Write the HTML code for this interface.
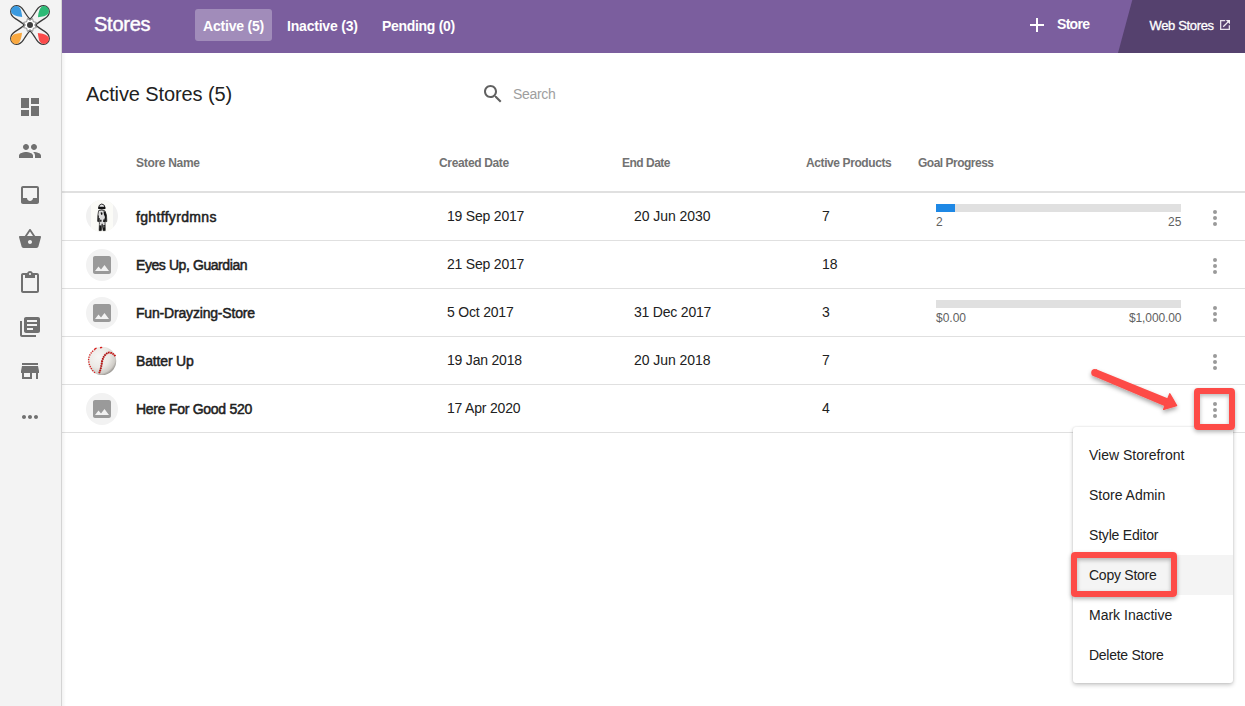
<!DOCTYPE html>
<html><head><meta charset="utf-8">
<style>
*{box-sizing:border-box;margin:0;padding:0}
html,body{width:1245px;height:706px;overflow:hidden;background:#fff;font-family:"Liberation Sans",sans-serif;color:#212121}
#side{position:absolute;left:0;top:0;width:62px;height:706px;background:#f3f3f3;border-right:1px solid #d4d4d4;z-index:3}
#sideShadow{position:absolute;left:62px;top:53px;width:4px;height:654px;background:linear-gradient(to right,rgba(0,0,0,.05),rgba(0,0,0,0));z-index:2}
#hdr{position:absolute;left:62px;top:0;width:1183px;height:53px;background:#7b5e9e;overflow:hidden}
#hdrShadow{position:absolute;left:62px;top:52px;width:1183px;height:2px;background:linear-gradient(to bottom,rgba(0,0,0,.06),rgba(0,0,0,0))}
.t{position:absolute;white-space:nowrap;line-height:1}
.w{color:#fff}
.b{font-weight:700}
.md{-webkit-text-stroke:0.3px #fff}
.sico{position:absolute;left:18px;width:24px;height:24px;fill:#707070}
.th{font-size:12px;font-weight:700;color:#727272}
.td{font-size:14px;color:#212121}
.nm{font-size:14px;font-weight:400;color:#212121;-webkit-text-stroke:0.5px #212121}
.line{position:absolute;left:62px;width:1183px;height:1px;background:#e0e0e0}
.av{position:absolute;left:86px;width:32px;height:32px;border-radius:50%;background:#f2f2f2;overflow:hidden}
.kb{position:absolute;left:1203px;width:24px;height:24px;fill:#9a9a9a}
.bar{position:absolute;left:936px;width:245px;height:8px;background:#e0e0e0}
.pl{font-size:12px;color:#616161}
.mi{font-size:14px;color:#212121}
</style></head><body>
<!-- sidebar -->
<div id="side">
  <svg style="position:absolute;left:10px;top:5px" width="40" height="40" viewBox="0 0 40 40">
    <g fill="none" stroke="#3a3a3a" stroke-width="1.25">
      <path id="lp" d="M20,14.3 C17.5,11.8 15.6,8.6 13.6,5.4 C11.6,2.2 9.3,0.7 6.4,0.7 C3.3,0.7 0.7,3.3 0.7,6.4 C0.7,9.3 2.2,11.6 5.4,13.6 C8.6,15.6 11.8,17.5 14.3,20"/>
      <use href="#lp" transform="rotate(90 20 20)"/>
      <use href="#lp" transform="rotate(180 20 20)"/>
      <use href="#lp" transform="rotate(270 20 20)"/>
    </g>
    <path id="tp" fill="#3a9ae0" d="M12.2,12 C8,11.6 3,10.5 1.6,8 C0,5 2.5,1.2 5.8,1.1 C9,1 10.8,3.6 11.2,6 C11.6,8 12,10 12.2,12Z"/>
    <path fill="#2dba76" d="M12.2,12 C8,11.6 3,10.5 1.6,8 C0,5 2.5,1.2 5.8,1.1 C9,1 10.8,3.6 11.2,6 C11.6,8 12,10 12.2,12Z" transform="rotate(90 20 20)"/>
    <path fill="#fb4b4b" d="M12.2,12 C8,11.6 3,10.5 1.6,8 C0,5 2.5,1.2 5.8,1.1 C9,1 10.8,3.6 11.2,6 C11.6,8 12,10 12.2,12Z" transform="rotate(180 20 20)"/>
    <path fill="#f9a83f" d="M12.2,12 C8,11.6 3,10.5 1.6,8 C0,5 2.5,1.2 5.8,1.1 C9,1 10.8,3.6 11.2,6 C11.6,8 12,10 12.2,12Z" transform="rotate(270 20 20)"/>
    <polygon points="26.37,22.64 23.25,23.25 22.64,26.37 20.00,24.60 17.36,26.37 16.75,23.25 13.63,22.64 15.40,20.00 13.63,17.36 16.75,16.75 17.36,13.63 20.00,15.40 22.64,13.63 23.25,16.75 26.37,17.36 24.60,20.00" fill="#fff" stroke="#505050" stroke-width="0.6" stroke-linejoin="miter"/>
    <circle cx="20" cy="20" r="3" fill="#3f3f3f"/>
  </svg>
  <!-- dashboard -->
  <svg class="sico" style="top:95px" viewBox="0 0 24 24"><path d="M3 13h8V3H3v10zm0 8h8v-6H3v6zm10 0h8V11h-8v10zm0-18v6h8V3h-8z"/></svg>
  <!-- people -->
  <svg class="sico" style="top:139px" viewBox="0 0 24 24"><path d="M16 11c1.66 0 2.99-1.34 2.99-3S17.66 5 16 5c-1.66 0-3 1.34-3 3s1.34 3 3 3zm-8 0c1.66 0 2.99-1.34 2.99-3S9.66 5 8 5C6.34 5 5 6.34 5 8s1.34 3 3 3zm0 2c-2.33 0-7 1.17-7 3.500V19h14v-2.5c0-2.330-4.670-3.500-7-3.500zm8 0c-.29 0-.62.02-.97.05 1.160.840 1.970 1.970 1.970 3.450V19h6v-2.5c0-2.330-4.670-3.500-7-3.500z"/></svg>
  <!-- inbox -->
  <svg class="sico" style="top:183px" viewBox="0 0 24 24"><path d="M19 3H4.99c-1.11 0-1.98.89-1.98 2L3 19c0 1.1.88 2 1.99 2H19c1.1 0 2-.9 2-2V5c0-1.11-.9-2-2-2zm0 12h-4c0 1.66-1.35 3-3 3s-3-1.34-3-3H4.99V5H19v10z"/></svg>
  <!-- basket -->
  <svg class="sico" style="top:227px" viewBox="0 0 24 24"><path d="M17.21 9l-4.38-6.56c-.19-.28-.51-.42-.83-.42-.32 0-.64.14-.83.43L6.79 9H2c-.55 0-1 .45-1 1 0 .09.01.18.04.27l2.54 9.270c.23.84 1 1.46 1.92 1.46h13c.92 0 1.69-.62 1.93-1.46l2.54-9.270L23 10c0-.55-.45-1-1-1h-4.79zM9 9l3-4.4L15 9H9zm3 8c-1.1 0-2-.9-2-2s.9-2 2-2 2 .9 2 2-.9 2-2 2z"/></svg>
  <!-- clipboard -->
  <svg class="sico" style="top:271px" viewBox="0 0 24 24"><path d="M19 2h-4.18C14.4.84 13.3 0 12 0c-1.3 0-2.4.84-2.82 2H5c-1.1 0-2 .9-2 2v16c0 1.1.9 2 2 2h14c1.1 0 2-.9 2-2V4c0-1.1-.9-2-2-2zm-7 0c.55 0 1 .45 1 1s-.45 1-1 1-1-.45-1-1 .45-1 1-1zm7 18H5V4h2v3h10V4h2v16z"/></svg>
  <!-- library books -->
  <svg class="sico" style="top:315px" viewBox="0 0 24 24"><path d="M4 6H2v14c0 1.1.9 2 2 2h14v-2H4V6zm16-4H8c-1.1 0-2 .9-2 2v12c0 1.1.9 2 2 2h12c1.1 0 2-.9 2-2V4c0-1.1-.9-2-2-2zm-1 9H9V9h10v2zm-4 4H9v-2h6v2zm4-8H9V5h10v2z"/></svg>
  <!-- store -->
  <svg class="sico" style="top:359px" viewBox="0 0 24 24"><path d="M20 4H4v2h16V4zm1 10v-2l-1-5H4l-1 5v2h1v6h10v-6h4v6h2v-6h1zm-9 4H6v-4h6v4z"/></svg>
  <!-- more -->
  <svg class="sico" style="top:405px" viewBox="0 0 24 24"><path d="M6 10c-1.1 0-2 .9-2 2s.9 2 2 2 2-.9 2-2-.9-2-2-2zm12 0c-1.1 0-2 .9-2 2s.9 2 2 2 2-.9 2-2-.9-2-2-2zm-6 0c-1.1 0-2 .9-2 2s.9 2 2 2 2-.9 2-2-.9-2-2-2z"/></svg>
</div>
<div id="sideShadow"></div>

<!-- header -->
<div id="hdr">
  <div style="position:absolute;left:1056px;top:0;width:200px;height:53px;background:#55416e;clip-path:polygon(14.3px 0,200px 0,200px 53px,0 53px)"></div>
  <div style="position:absolute;left:133px;top:9px;width:77px;height:32px;border-radius:3px;background:rgba(255,255,255,.29)"></div>
</div>
<div class="t w" style="left:94px;top:14.3px;font-size:20px;letter-spacing:-0.25px;-webkit-text-stroke:0.45px #fff">Stores</div>
<div class="t w b" style="left:203px;top:18.5px;font-size:14px;letter-spacing:-0.2px">Active (5)</div>
<div class="t w b" style="left:287px;top:18.5px;font-size:14px;letter-spacing:-0.2px">Inactive (3)</div>
<div class="t w b" style="left:382px;top:18.5px;font-size:14px;letter-spacing:-0.3px">Pending (0)</div>
<svg style="position:absolute;left:1030px;top:18px" width="14" height="14" viewBox="0 0 14 14"><path d="M6 0h2v6h6v2H8v6H6V8H0V6h6z" fill="#fff"/></svg>
<div class="t w b" style="left:1057px;top:17px;font-size:14px;letter-spacing:-0.7px">Store</div>
<div class="t w md" style="left:1149.5px;top:18.8px;font-size:13px;letter-spacing:-0.34px">Web Stores</div>
<svg style="position:absolute;left:1219.5px;top:19.5px;opacity:.9" width="11" height="11" viewBox="0 0 11 11"><path d="M5.2,0.65 H0.65 V9.35 H9.35 V5.2" fill="none" stroke="#f4f2f7" stroke-width="1.3"/><path d="M3.2,6.8 L8.6,1.4" fill="none" stroke="#fff" stroke-width="1.3"/><path d="M5.8,0 H10 V4.2 Z" fill="#fff"/></svg>

<!-- title & search -->
<div class="t" style="left:86px;top:84px;font-size:20px;letter-spacing:-0.1px;color:#212121">Active Stores (5)</div>
<svg style="position:absolute;left:481px;top:82px" width="24" height="24" viewBox="0 0 24 24"><path fill="#616161" d="M15.5 14h-.79l-.28-.27C15.41 12.59 16 11.11 16 9.5 16 5.910 13.090 3 9.5 3S3 5.910 3 9.5 5.910 16 9.5 16c1.610 0 3.090-.59 4.230-1.570l.27.28v.79l5 4.990L20.490 19l-4.990-5zm-6 0C7.010 14 5 11.990 5 9.5S7.010 5 9.5 5 14 7.010 14 9.5 11.990 14 9.5 14z"/></svg>
<div class="t" style="left:513px;top:87px;font-size:14px;letter-spacing:-0.3px;color:#9e9e9e">Search</div>

<!-- table header -->
<div class="t th" style="left:136px;top:157px;letter-spacing:-0.3px">Store Name</div>
<div class="t th" style="left:439px;top:157px;letter-spacing:-0.35px">Created Date</div>
<div class="t th" style="left:622px;top:157px;letter-spacing:-0.5px">End Date</div>
<div class="t th" style="left:806px;top:157px;letter-spacing:-0.4px">Active Products</div>
<div class="t th" style="left:918px;top:157px;letter-spacing:-0.5px">Goal Progress</div>
<div class="line" style="top:191px;height:2px"></div>

<!-- rows -->
<div class="line" style="top:240px"></div>
<div class="line" style="top:288px"></div>
<div class="line" style="top:336px"></div>
<div class="line" style="top:384px"></div>
<div class="line" style="top:432px"></div>

<!-- row 1 -->
<div class="av" style="top:200px;background:#f1f1f1">
  <svg width="32" height="32" viewBox="0 0 32 32">
    <rect x="5" y="0" width="22" height="32" fill="#fbfbf7"/>
    <!-- silhouette light -->
    <path d="M12.6 8.4 Q12.6 4.2 15.8 4 Q19 4.2 19.1 8.4 Z" fill="#e9e9e9" stroke="#111" stroke-width="0.9"/>
    <path d="M12.4 6.8 H19.2 V9 Q15.8 9.8 12.4 9Z" fill="#111"/>
    <g transform="translate(16 0) scale(0.8 1) translate(-16 0)">
    <path d="M11.8 10.6 Q15.6 9.6 19.6 10.8 L21.6 15 L22 21.5 L20.6 21.8 L19.9 17.8 L19.8 22.5 L20 30.6 L17.4 30.6 L16.2 23.8 L15.1 30.6 L12.5 30.6 L12.8 22.5 L12.4 18 L11.9 21.8 L10.6 21.4 L10.9 15Z" fill="#dcdcdc" stroke="#151515" stroke-width="0.8"/>
    <g fill="#141414">
      <path d="M17.8 11.2 L20.4 11.8 L21.4 15.8 L21.8 21.5 L20.4 21.6 L19.6 16.8 L18.4 14.6Z"/>
      <path d="M14.2 12.6 L16.2 12.2 L16.8 14.2 L15 15Z"/>
      <path d="M13.4 19.6 L15.4 19 L15.6 21.6 L13.4 21.8Z M17.6 19.6 L19.6 19.2 L19.7 22 L17.4 22Z"/>
      <path d="M12.8 25 L15.4 25.4 L15.1 30.6 L12.5 30.6Z"/>
      <path d="M16.9 25.4 L19.9 25 L20 30.6 L17.4 30.6Z"/>
      <path d="M10.8 15.6 L12 15.4 L11.9 21.6 L10.6 21.4Z"/>
    </g>
    <g fill="#f2f2f2">
      <circle cx="13.6" cy="24.8" r="0.6"/>
      <circle cx="18.4" cy="26.8" r="0.6"/>
      <circle cx="14.8" cy="19.6" r="0.8"/>
    </g>
  </g>
  </svg>
</div>
<div class="t nm" style="left:136px;top:210px;letter-spacing:0.33px">fghtffyrdmns</div>
<div class="t td" style="left:447px;top:209px;letter-spacing:-0.2px">19 Sep 2017</div>
<div class="t td" style="left:634px;top:209px;letter-spacing:-0.05px">20 Jun 2030</div>
<div class="t td" style="left:822px;top:209px">7</div>
<div class="bar" style="top:204px"><div style="width:19px;height:8px;background:#1e88e5"></div></div>
<div class="t pl" style="left:936px;top:216px">2</div>
<div class="t pl" style="left:1168px;top:216px">25</div>
<svg class="kb" style="top:206px" viewBox="0 0 24 24"><circle cx="12" cy="6" r="2"/><circle cx="12" cy="12" r="2"/><circle cx="12" cy="18" r="2"/></svg>

<!-- row 2 -->
<div class="av" style="top:249px"><svg style="position:absolute;left:7px;top:7px" width="18" height="18" viewBox="3 3 18 18"><path fill="#9a9a9a" d="M21 19V5c0-1.1-.9-2-2-2H5c-1.1 0-2 .9-2 2v14c0 1.1.9 2 2 2h14c1.1 0 2-.9 2-2zM8.5 13.5l2.5 3.01L14.5 12l4.5 6H5l3.5-4.5z"/></svg></div>
<div class="t nm" style="left:136px;top:258px;letter-spacing:-0.42px">Eyes Up, Guardian</div>
<div class="t td" style="left:447px;top:257px;letter-spacing:-0.2px">21 Sep 2017</div>
<div class="t td" style="left:822px;top:257px">18</div>
<svg class="kb" style="top:254px" viewBox="0 0 24 24"><circle cx="12" cy="6" r="2"/><circle cx="12" cy="12" r="2"/><circle cx="12" cy="18" r="2"/></svg>

<!-- row 3 -->
<div class="av" style="top:297px"><svg style="position:absolute;left:7px;top:7px" width="18" height="18" viewBox="3 3 18 18"><path fill="#9a9a9a" d="M21 19V5c0-1.1-.9-2-2-2H5c-1.1 0-2 .9-2 2v14c0 1.1.9 2 2 2h14c1.1 0 2-.9 2-2zM8.5 13.5l2.5 3.01L14.5 12l4.5 6H5l3.5-4.5z"/></svg></div>
<div class="t nm" style="left:136px;top:306px;letter-spacing:-0.18px">Fun-Drayzing-Store</div>
<div class="t td" style="left:447px;top:305px;letter-spacing:-0.2px">5 Oct 2017</div>
<div class="t td" style="left:634px;top:305px;letter-spacing:-0.2px">31 Dec 2017</div>
<div class="t td" style="left:822px;top:305px">3</div>
<div class="bar" style="top:300px"></div>
<div class="t pl" style="left:936px;top:312px">$0.00</div>
<div class="t pl" style="left:1129px;top:312px;letter-spacing:-0.12px">$1,000.00</div>
<svg class="kb" style="top:302px" viewBox="0 0 24 24"><circle cx="12" cy="6" r="2"/><circle cx="12" cy="12" r="2"/><circle cx="12" cy="18" r="2"/></svg>

<!-- row 4 -->
<div class="av" style="top:345px;background:#fff">
  <svg width="32" height="32" viewBox="0 0 32 32">
    <defs><radialGradient id="bg" cx="38%" cy="35%" r="70%"><stop offset="0" stop-color="#f7f6f4"/><stop offset=".55" stop-color="#ebe9e5"/><stop offset=".85" stop-color="#cfccc7"/><stop offset="1" stop-color="#8f8c88"/></radialGradient></defs>
    <circle cx="16" cy="15.9" r="14.2" fill="url(#bg)"/>
    <path d="M9.2 4.2 Q3 8.5 2.6 14.8 Q3 23 9.6 28.2" fill="none" stroke="#d81c1c" stroke-width="1.3" stroke-dasharray="1.3 1.1"/>
    <path d="M29.4 11.2 Q26 7 22.3 7.7 Q17.5 9.5 16 16.9 Q15 24 13.1 28.2" fill="none" stroke="#c41414" stroke-width="2" stroke-dasharray="1.6 0.7"/>
    <path d="M22.3 7.7 Q17.5 9.5 16 16.9 Q15 24 13.1 28.2" fill="none" stroke="#3a0a0a" stroke-width="0.6" stroke-dasharray="1 1.3"/>
    <path d="M8.6 3.8 L10.6 3.2 M14 2.8 L16.2 2.4" stroke="#d81c1c" stroke-width="1.4"/>
  </svg>
</div>
<div class="t nm" style="left:136px;top:354px;letter-spacing:-0.16px">Batter Up</div>
<div class="t td" style="left:447px;top:353px;letter-spacing:-0.2px">19 Jan 2018</div>
<div class="t td" style="left:634px;top:353px;letter-spacing:-0.05px">20 Jun 2018</div>
<div class="t td" style="left:822px;top:353px">7</div>
<svg class="kb" style="top:350px" viewBox="0 0 24 24"><circle cx="12" cy="6" r="2"/><circle cx="12" cy="12" r="2"/><circle cx="12" cy="18" r="2"/></svg>

<!-- row 5 -->
<div class="av" style="top:393px"><svg style="position:absolute;left:7px;top:7px" width="18" height="18" viewBox="3 3 18 18"><path fill="#9a9a9a" d="M21 19V5c0-1.1-.9-2-2-2H5c-1.1 0-2 .9-2 2v14c0 1.1.9 2 2 2h14c1.1 0 2-.9 2-2zM8.5 13.5l2.5 3.01L14.5 12l4.5 6H5l3.5-4.5z"/></svg></div>
<div class="t nm" style="left:136px;top:402px;letter-spacing:-0.27px">Here For Good 520</div>
<div class="t td" style="left:447px;top:401px;letter-spacing:-0.2px">17 Apr 2020</div>
<div class="t td" style="left:822px;top:401px">4</div>
<svg class="kb" style="top:398px" viewBox="0 0 24 24"><circle cx="12" cy="6" r="2"/><circle cx="12" cy="12" r="2"/><circle cx="12" cy="18" r="2"/></svg>

<!-- menu -->
<div style="position:absolute;left:1073px;top:427px;width:160px;height:256px;background:#fff;border-radius:3px;box-shadow:0 2px 4px rgba(0,0,0,.22),0 0 2px rgba(0,0,0,.12)">
  <div style="position:absolute;left:0;top:128px;width:160px;height:40px;background:#f4f4f4"></div>
</div>
<div class="t mi" style="left:1089px;top:448px">View Storefront</div>
<div class="t mi" style="left:1089px;top:488px">Store Admin</div>
<div class="t mi" style="left:1089px;top:528px;letter-spacing:-0.2px">Style Editor</div>
<div class="t mi" style="left:1089px;top:568px;letter-spacing:-0.25px">Copy Store</div>
<div class="t mi" style="left:1089px;top:608px">Mark Inactive</div>
<div class="t mi" style="left:1089px;top:648px;letter-spacing:-0.27px">Delete Store</div>

<!-- annotations -->
<div style="position:absolute;left:1194px;top:388px;width:41px;height:42px;border:6px solid #fd4b47;border-radius:4px;box-shadow:0 2px 4px rgba(0,0,0,.3), inset 0 2px 4px rgba(0,0,0,.28)"></div>
<div style="position:absolute;left:1071px;top:552px;width:106px;height:45px;border:6px solid #fd4b47;border-radius:4px;box-shadow:0 2px 4px rgba(0,0,0,.3), inset 0 2px 4px rgba(0,0,0,.28)"></div>
<svg style="position:absolute;left:1080px;top:360px;overflow:visible" width="110" height="60" viewBox="0 0 110 60">
  <defs><filter id="sh" x="-20%" y="-40%" width="140%" height="180%"><feDropShadow dx="0" dy="2.5" stdDeviation="2" flood-color="#000" flood-opacity=".35"/></filter></defs>
  <g filter="url(#sh)">
    <path d="M16.18,9.37 L88.25,38.43 L84.95,46.37 L13.42,16.03 Z" fill="#fd4b47"/>
    <circle cx="14.8" cy="12.7" r="3.6" fill="#fd4b47"/>
    <path d="M89.8,33.8 L96.6,45.5 L83.6,49.4 Z" fill="#fd4b47" stroke="#fd4b47" stroke-width="1.4" stroke-linejoin="round"/>
  </g>
</svg>
</body></html>
